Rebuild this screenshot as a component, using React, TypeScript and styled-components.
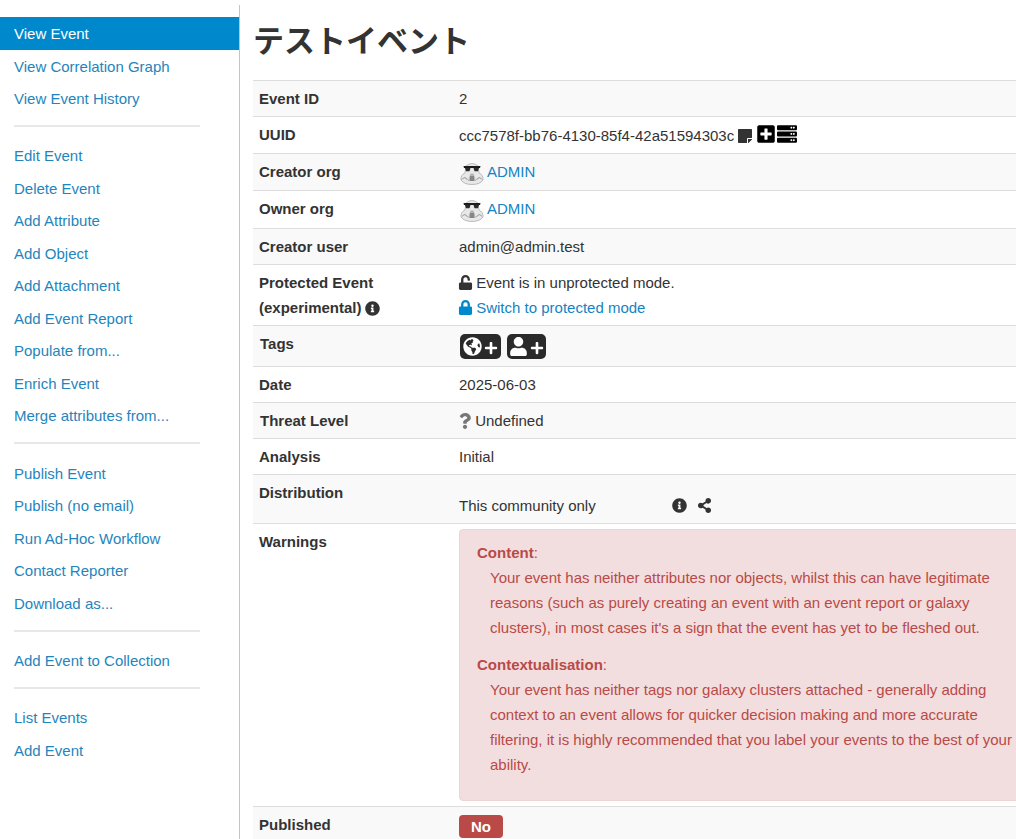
import React from "react";
import styled, { createGlobalStyle } from "styled-components";
import {
  FaGlobeAmericas,
  FaInfoCircle,
  FaLock,
  FaPlus,
  FaPlusSquare,
  FaQuestion,
  FaServer,
  FaShareAlt,
  FaStickyNote,
  FaUnlock,
  FaUser,
} from "react-icons/fa";

const GlobalStyle = createGlobalStyle`
  html, body {
    margin: 0;
    padding: 0;
    background: #fff;
    overflow: hidden;
    height: 839px;
  }
  body {
    font-family: "Liberation Sans", Arial, sans-serif;
    font-size: 15px;
    color: #333;
  }
`;

const Page = styled.div`
  display: flex;
  width: 1016px;
  height: 839px;
  overflow: hidden;
`;

const Sidebar = styled.nav`
  flex: 0 0 240px;
  box-sizing: border-box;
  margin-top: 5px;
  padding-top: 12px;
  border-right: 1px solid #c4c4c4;
`;

const NavGroup = styled.ul`
  list-style: none;
  margin: 0;
  padding: 0;
`;

const NavItem = styled.li<{ $active?: boolean }>`
  height: 32.5px;
  line-height: 33px;
  padding-left: 14px;
  color: ${(p) => (p.$active ? "#fff" : "#1f85bc")};
  background: ${(p) => (p.$active ? "#0088cc" : "transparent")};
`;

const NavDivider = styled.hr`
  width: 186px;
  height: 2px;
  margin: 10.5px 0 12.25px 14px;
  border: 0;
  background: #e8e8e8;
`;

const Main = styled.main`
  flex: 1;
  min-width: 0;
  padding-left: 13px;
`;

const Title = styled.h1`
  margin: 0;
  height: 80px;
  box-sizing: border-box;
  padding-top: 14px;
  font-family: "Noto Sans CJK JP", "Liberation Sans", sans-serif;
  font-size: 31px;
  line-height: 50px;
  font-weight: 700;
  color: #333;
`;

const Table = styled.div`
  width: 800px;
  border-bottom: 1px solid #ddd;
`;

const Row = styled.div<{ $h: number }>`
  display: flex;
  box-sizing: border-box;
  height: ${(p) => p.$h}px;
  border-top: 1px solid #ddd;
  &:nth-child(odd) {
    background: #f9f9f9;
  }
`;

const Label = styled.div<{ $top: number; $left?: number }>`
  flex: 0 0 206px;
  box-sizing: border-box;
  padding: ${(p) => p.$top}px 0 0 ${(p) => p.$left ?? 6}px;
  font-weight: 700;
  line-height: 25px;
`;

const Value = styled.div<{ $top: number }>`
  flex: 1;
  padding-top: ${(p) => p.$top}px;
  line-height: 25px;
`;

const Line = styled.div`
  display: flex;
  align-items: center;
`;

const Link = styled.span`
  color: #1384c4;
`;

const OrgLink = styled(Link)`
  margin-top: -1px;
`;

const InlineIcon = styled.span<{ $size: number; $color?: string; $gap?: number; $right?: number; $lift?: number }>`
  display: inline-flex;
  align-items: center;
  justify-content: center;
  font-size: ${(p) => p.$size}px;
  color: ${(p) => p.$color ?? "#333"};
  margin-left: ${(p) => p.$gap ?? 0}px;
  margin-right: ${(p) => p.$right ?? 0}px;
  transform: translateY(${(p) => -(p.$lift ?? 0)}px);
  vertical-align: middle;
`;

const TagButtons = styled.div`
  display: flex;
  gap: 6px;
  padding-left: 1px;
`;

const TagButton = styled.div<{ $w: number }>`
  display: flex;
  align-items: center;
  justify-content: center;
  gap: 2px;
  width: ${(p) => p.$w}px;
  height: 25px;
  border-radius: 5px;
  background: #2a2a2a;
  color: #fff;
  font-size: 19px;
`;

const PlusMark = styled(FaPlus)`
  font-size: 14px;
  margin-top: 2px;
`;

const DistributionText = styled.span`
  width: 213px;
`;

const WarningBox = styled.div`
  box-sizing: border-box;
  width: 566px;
  height: 272px;
  margin-top: 5px;
  padding: 10px 5px 0 17px;
  border-radius: 4px;
  background: #f2dede;
  border: 1px solid #eed3d7;
  color: #b94a48;
  line-height: 25px;
`;

const WarningBlock = styled.div`
  margin-bottom: 12px;
`;

const WarningBody = styled.div`
  padding-left: 13px;
`;

const Pill = styled.span`
  display: inline-block;
  width: 44px;
  height: 23px;
  border-radius: 4px;
  background: #b94a48;
  color: #fff;
  font-weight: 700;
  text-align: center;
  line-height: 23px;
`;

const Trooper = styled.svg`
  width: 24px;
  height: 24px;
  margin: 0 3px 0 1px;
  flex: none;
  transform: translateY(1px);
`;

function TrooperIcon() {
  return (
    <Trooper viewBox="0 0 24 24">
      <path d="M6 5 Q12 0 18 5 L19 12 Q23.5 14 23 19 Q20 23.5 12 23.5 Q4 23.5 1 19 Q0.5 14 5 12 Z" fill="#e8e8e8" stroke="#a4a4a4" strokeWidth="0.7" />
      <path d="M3.5 5 H20.5 L20 7 H4 Z" fill="#1c1c1c" />
      <path d="M5 7 h5.5 l-1 3.2 h-3.5 Z M13.5 7 h5.5 l-1 3.2 h-3.5 Z" fill="#2b2b2b" />
      <path d="M10.5 12.5 h3 l2.5 7.5 h-8 Z" fill="#b4b4b4" />
      <path d="M10.8 15 v5 M12 15 v5 M13.2 15 v5" stroke="#4a4a4a" strokeWidth="0.6" />
      <path d="M2 18.5 Q5 14.5 7.5 19 M22 18.5 Q19 14.5 16.5 19" stroke="#8a8a8a" strokeWidth="0.9" fill="none" />
    </Trooper>
  );
}

const navGroups: { text: string; active?: boolean }[][] = [
  [{ text: "View Event", active: true }, { text: "View Correlation Graph" }, { text: "View Event History" }],
  [
    { text: "Edit Event" },
    { text: "Delete Event" },
    { text: "Add Attribute" },
    { text: "Add Object" },
    { text: "Add Attachment" },
    { text: "Add Event Report" },
    { text: "Populate from..." },
    { text: "Enrich Event" },
    { text: "Merge attributes from..." },
  ],
  [
    { text: "Publish Event" },
    { text: "Publish (no email)" },
    { text: "Run Ad-Hoc Workflow" },
    { text: "Contact Reporter" },
    { text: "Download as..." },
  ],
  [{ text: "Add Event to Collection" }],
  [{ text: "List Events" }, { text: "Add Event" }],
];

export default function App() {
  return (
    <Page>
      <GlobalStyle />
      <Sidebar>
        {navGroups.map((group, i) => (
          <React.Fragment key={i}>
            {i > 0 && <NavDivider />}
            <NavGroup>
              {group.map((item) => (
                <NavItem key={item.text} $active={item.active}>
                  {item.text}
                </NavItem>
              ))}
            </NavGroup>
          </React.Fragment>
        ))}
      </Sidebar>
      <Main>
        <Title>テストイベント</Title>
        <Table>
          <Row $h={36}>
            <Label $top={5}>Event ID</Label>
            <Value $top={5}>2</Value>
          </Row>
          <Row $h={37}>
            <Label $top={5}>UUID</Label>
            <Value $top={6}>
              <Line>
                ccc7578f-bb76-4130-85f4-42a51594303c
                <InlineIcon $size={16} $gap={3}>
                  <FaStickyNote />
                </InlineIcon>
                <InlineIcon $size={20} $color="#000" $gap={3} $lift={2}>
                  <FaPlusSquare />
                </InlineIcon>
                <InlineIcon $size={20} $color="#000" $gap={1} $lift={2}>
                  <FaServer />
                </InlineIcon>
              </Line>
            </Value>
          </Row>
          <Row $h={37}>
            <Label $top={5}>Creator org</Label>
            <Value $top={6}>
              <Line>
                <TrooperIcon />
                <OrgLink>ADMIN</OrgLink>
              </Line>
            </Value>
          </Row>
          <Row $h={38}>
            <Label $top={5}>Owner org</Label>
            <Value $top={6}>
              <Line>
                <TrooperIcon />
                <OrgLink>ADMIN</OrgLink>
              </Line>
            </Value>
          </Row>
          <Row $h={36}>
            <Label $top={5}>Creator user</Label>
            <Value $top={5}>admin@admin.test</Value>
          </Row>
          <Row $h={61}>
            <Label $top={5}>
              Protected Event
              <br />
              (experimental){" "}
              <InlineIcon $size={15} $gap={-1} $lift={1}>
                <FaInfoCircle />
              </InlineIcon>
            </Label>
            <Value $top={5}>
              <Line>
                <InlineIcon $size={15} $gap={-1} $right={-1}>
                  <FaUnlock />
                </InlineIcon>
                &nbsp;Event is in unprotected mode.
              </Line>
              <Line>
                <InlineIcon $size={15} $color="#0088cc" $gap={-1} $right={-1}>
                  <FaLock />
                </InlineIcon>
                &nbsp;<Link>Switch to protected mode</Link>
              </Line>
            </Value>
          </Row>
          <Row $h={41}>
            <Label $top={5} $left={7}>
              Tags
            </Label>
            <Value $top={8}>
              <TagButtons>
                <TagButton $w={41}>
                  <FaGlobeAmericas />
                  <PlusMark />
                </TagButton>
                <TagButton $w={39}>
                  <FaUser />
                  <PlusMark />
                </TagButton>
              </TagButtons>
            </Value>
          </Row>
          <Row $h={36}>
            <Label $top={5}>Date</Label>
            <Value $top={5}>2025-06-03</Value>
          </Row>
          <Row $h={36}>
            <Label $top={5} $left={7}>
              Threat Level
            </Label>
            <Value $top={5}>
              <Line>
                <InlineIcon $size={16} $color="#777" $gap={-2} $right={-2}>
                  <FaQuestion />
                </InlineIcon>
                &nbsp;Undefined
              </Line>
            </Value>
          </Row>
          <Row $h={36}>
            <Label $top={5}>Analysis</Label>
            <Value $top={5}>Initial</Value>
          </Row>
          <Row $h={49}>
            <Label $top={5}>Distribution</Label>
            <Value $top={18}>
              <Line>
                <DistributionText>This community only</DistributionText>
                <InlineIcon $size={15}>
                  <FaInfoCircle />
                </InlineIcon>
                <InlineIcon $size={15} $gap={10}>
                  <FaShareAlt />
                </InlineIcon>
              </Line>
            </Value>
          </Row>
          <Row $h={283}>
            <Label $top={5}>Warnings</Label>
            <Value $top={0}>
              <WarningBox>
                <WarningBlock>
                  <strong>Content</strong>:
                  <WarningBody>
                    Your event has neither attributes nor objects, whilst this can have legitimate reasons (such as
                    purely creating an event with an event report or galaxy clusters), in most cases it's a sign that
                    the event has yet to be fleshed out.
                  </WarningBody>
                </WarningBlock>
                <WarningBlock>
                  <strong>Contextualisation</strong>:
                  <WarningBody>
                    Your event has neither tags nor galaxy clusters attached - generally adding context to an event
                    allows for quicker decision making and more accurate filtering, it is highly recommended that you
                    label your events to the best of your ability.
                  </WarningBody>
                </WarningBlock>
              </WarningBox>
            </Value>
          </Row>
          <Row $h={40}>
            <Label $top={5}>Published</Label>
            <Value $top={7}>
              <Pill>No</Pill>
            </Value>
          </Row>
        </Table>
      </Main>
    </Page>
  );
}
